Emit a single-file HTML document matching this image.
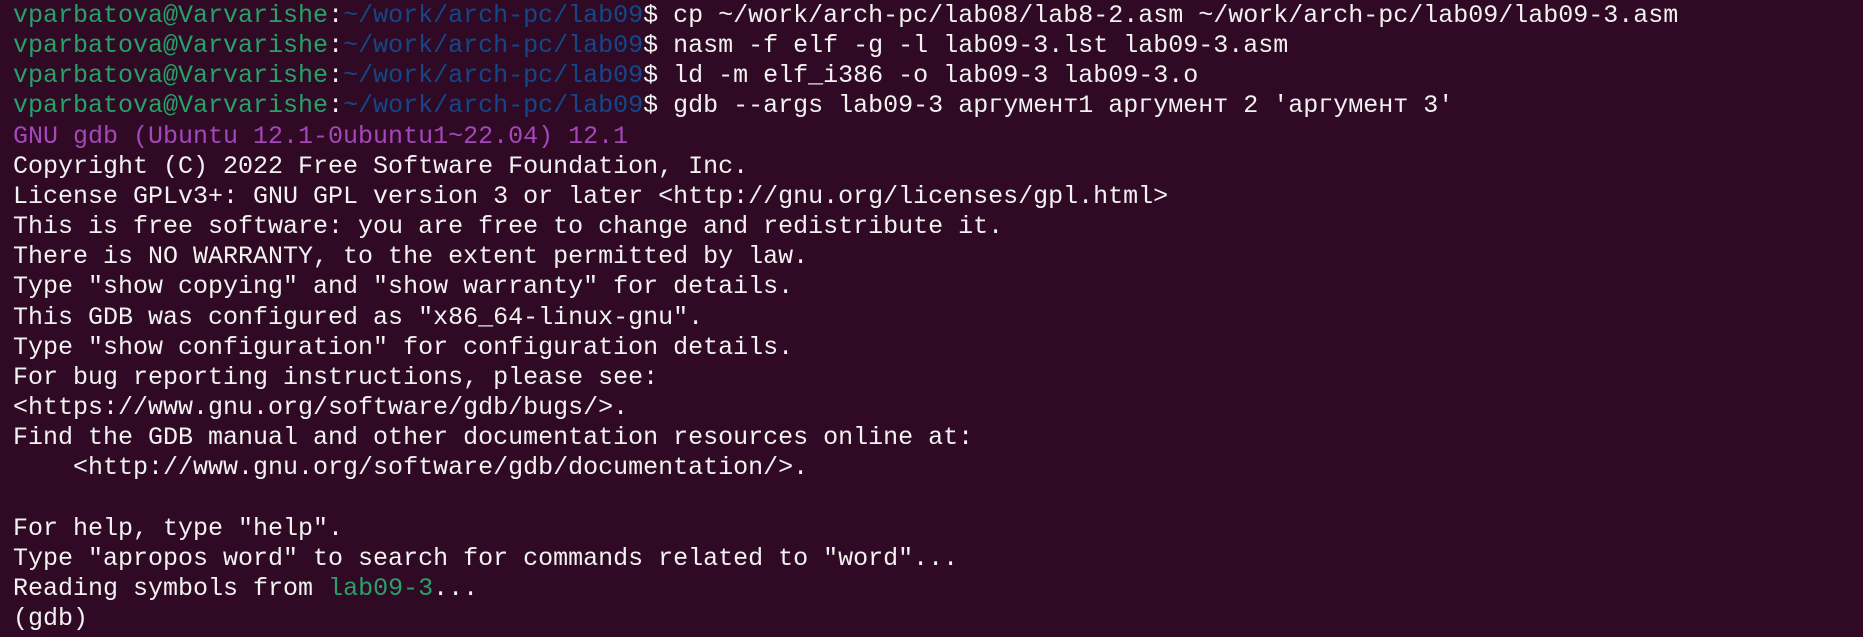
<!DOCTYPE html>
<html><head><meta charset="utf-8"><style>
html,body{margin:0;padding:0;background:#300a24;width:1863px;height:637px;overflow:hidden}
pre{margin:0;padding:1px 0 0 13px;font-family:"Liberation Mono",monospace;font-size:25px;line-height:30.15px;color:#f2f2f2;white-space:pre}
.g{color:#26a269}.b{color:#12488b}.p{color:#a347ba}
</style></head><body><pre><span class="g">vparbatova@Varvarishe</span>:<span class="b">~/work/arch-pc/lab09</span>$ cp ~/work/arch-pc/lab08/lab8-2.asm ~/work/arch-pc/lab09/lab09-3.asm
<span class="g">vparbatova@Varvarishe</span>:<span class="b">~/work/arch-pc/lab09</span>$ nasm -f elf -g -l lab09-3.lst lab09-3.asm
<span class="g">vparbatova@Varvarishe</span>:<span class="b">~/work/arch-pc/lab09</span>$ ld -m elf_i386 -o lab09-3 lab09-3.o
<span class="g">vparbatova@Varvarishe</span>:<span class="b">~/work/arch-pc/lab09</span>$ gdb --args lab09-3 аргумент1 аргумент 2 'аргумент 3'
<span class="p">GNU gdb (Ubuntu 12.1-0ubuntu1~22.04) 12.1</span>
Copyright (C) 2022 Free Software Foundation, Inc.
License GPLv3+: GNU GPL version 3 or later &lt;http://gnu.org/licenses/gpl.html&gt;
This is free software: you are free to change and redistribute it.
There is NO WARRANTY, to the extent permitted by law.
Type "show copying" and "show warranty" for details.
This GDB was configured as "x86_64-linux-gnu".
Type "show configuration" for configuration details.
For bug reporting instructions, please see:
&lt;https://www.gnu.org/software/gdb/bugs/&gt;.
Find the GDB manual and other documentation resources online at:
    &lt;http://www.gnu.org/software/gdb/documentation/&gt;.

For help, type "help".
Type "apropos word" to search for commands related to "word"...
Reading symbols from <span class="g">lab09-3</span>...
(gdb)</pre></body></html>
